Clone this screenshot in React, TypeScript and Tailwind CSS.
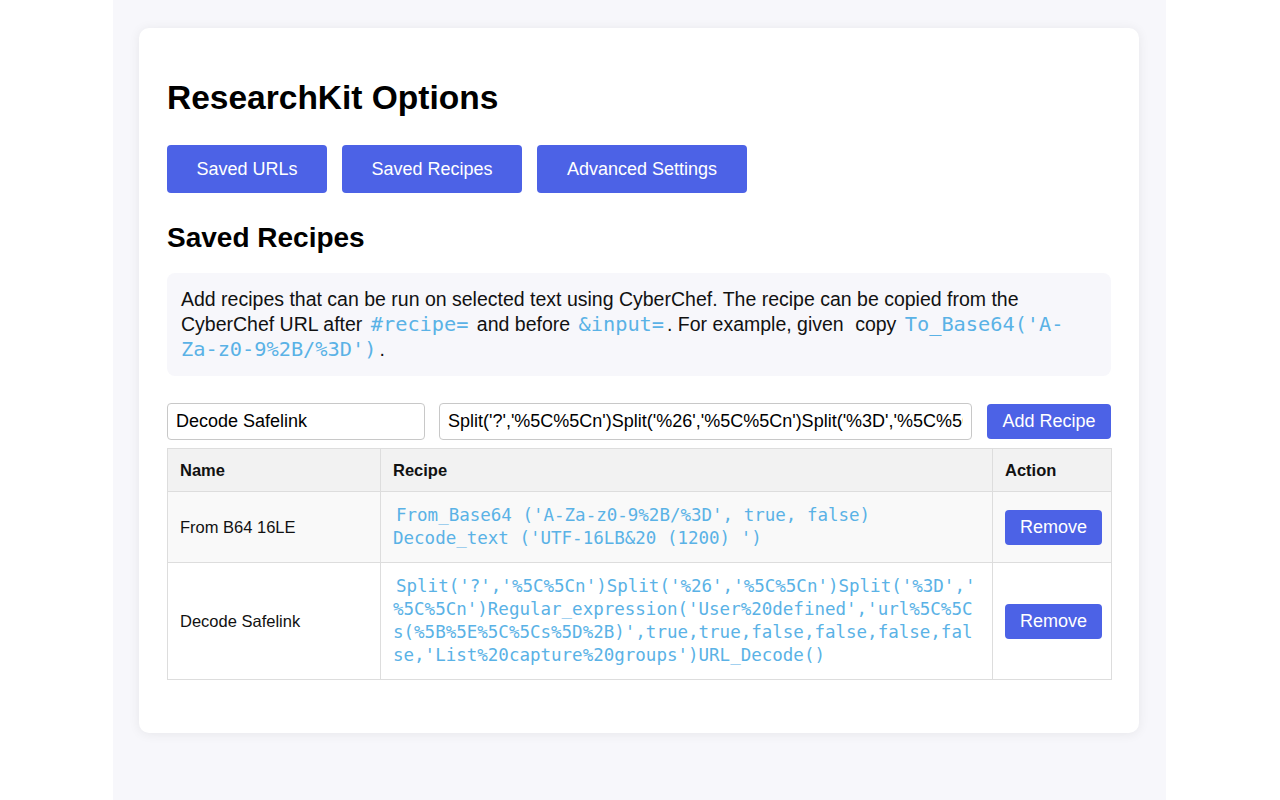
const SAFELINK =
  "Split('?','%5C%5Cn')Split('%26','%5C%5Cn')Split('%3D','%5C%5Cn')Regular_expression('User%20defined','url%5C%5Cs(%5B%5E%5C%5Cs%5D%2B)',true,true,false,false,false,false,'List%20capture%20groups')URL_Decode()";

const recipes = [
  {
    name: 'From B64 16LE',
    recipe: "From_Base64 ('A-Za-z0-9%2B/%3D', true, false) Decode_text ('UTF-16LB&20 (1200) ')"
  },
  { name: 'Decode Safelink', recipe: SAFELINK }
];

function Code({ children }: { children?: string }) {
  return <code className="px-[3px] font-['DejaVu_Sans_Mono',monospace] text-[20.3px] text-[#5ab2e6]">{children}</code>;
}

function NavButton({ label, width }: { label: string; width: string }) {
  return (
    <button type="button" className={`h-12 rounded-[4px] bg-[#4c62e6] text-[18px] text-white ${width}`}>
      {label}
    </button>
  );
}

export default function App() {
  return (
    <div className="min-h-screen bg-white font-['Liberation_Sans',Arial,sans-serif] text-[#111]">
      <div className="ml-[113px] min-h-screen w-[1053px] bg-[#f7f7fb] px-[26px] pt-[28px]">
        <div className="w-[1000px] rounded-[10px] bg-white px-[28px] pt-[50px] pb-[53px] shadow-[0_1px_12px_rgba(0,0,0,0.07)]">
          <h1 className="text-[33.5px] leading-[40px] font-bold text-black">ResearchKit Options</h1>
          <div className="mt-[27px] flex gap-[15px]">
            <NavButton label="Saved URLs" width="w-[160px]" />
            <NavButton label="Saved Recipes" width="w-[180px]" />
            <NavButton label="Advanced Settings" width="w-[210px]" />
          </div>
          <h2 className="mt-[29px] text-[28px] leading-[32px] font-bold text-black">Saved Recipes</h2>
          <div className="mt-[19px] rounded-[8px] bg-[#f7f7fb] px-[14px] py-[14px] text-[19.5px] leading-[25px]">
            Add recipes that can be run on selected text using CyberChef. The recipe can be copied from the CyberChef URL
            after <Code>#recipe=</Code> and before <Code>&amp;input=</Code>. For example, given <Code /> copy{' '}
            <Code>To_Base64('A-Za-z0-9%2B/%3D')</Code>.
          </div>
          <div className="mt-[27px] flex items-center">
            <input
              className="h-[37px] w-[258px] rounded-[4px] border border-[#c8c8c8] px-2 text-[18px] text-black outline-none"
              defaultValue="Decode Safelink"
            />
            <input
              className="ml-[14px] h-[37px] w-[533px] rounded-[4px] border border-[#c8c8c8] px-2 text-[18px] text-black outline-none"
              defaultValue={SAFELINK}
            />
            <button type="button" className="ml-[15px] h-[35px] w-[124px] rounded-[4px] bg-[#4c62e6] text-[18px] text-white">
              Add Recipe
            </button>
          </div>
          <table className="mt-[8px] w-[944px] table-fixed border-collapse text-[16.5px]">
            <colgroup>
              <col className="w-[213px]" />
              <col className="w-[612px]" />
              <col className="w-[119px]" />
            </colgroup>
            <thead>
              <tr className="bg-[#f2f2f2]">
                <th className="border border-[#dddddd] px-3 py-3 text-left leading-[18px] font-bold">Name</th>
                <th className="border border-[#dddddd] px-3 py-3 text-left leading-[18px] font-bold">Recipe</th>
                <th className="border border-[#dddddd] px-3 py-3 text-left leading-[18px] font-bold">Action</th>
              </tr>
            </thead>
            <tbody>
              {recipes.map((row, index) => (
                <tr key={row.name} className={index % 2 === 0 ? 'bg-[#f9f9f9]' : 'bg-white'}>
                  <td className="border border-[#dddddd] px-3 py-3 align-middle">{row.name}</td>
                  <td className="border border-[#dddddd] px-3 py-3 align-middle leading-[23px]">
                    <code className="px-[3px] font-['DejaVu_Sans_Mono',monospace] text-[17.5px] leading-[23px] break-words text-[#5ab2e6]">
                      {row.recipe}
                    </code>
                  </td>
                  <td className="border border-[#dddddd] px-3 py-3 align-middle">
                    <button type="button" className="h-[35px] w-[97px] rounded-[4px] bg-[#4c62e6] text-[18px] text-white">
                      Remove
                    </button>
                  </td>
                </tr>
              ))}
            </tbody>
          </table>
        </div>
      </div>
    </div>
  );
}
